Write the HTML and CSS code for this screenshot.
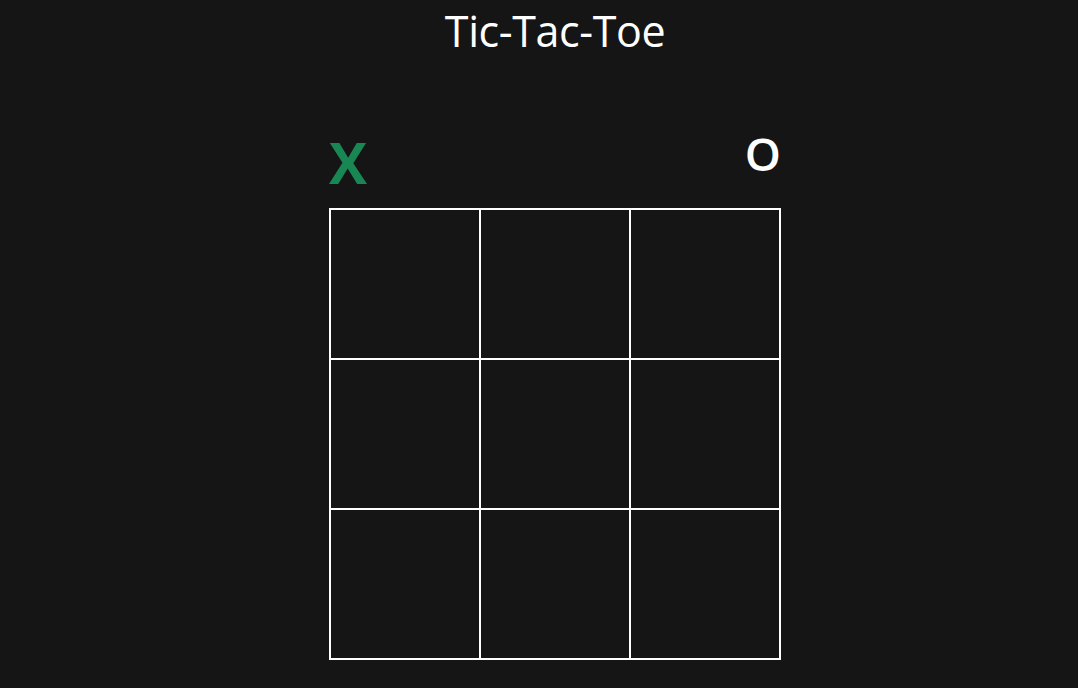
FILE: index.html
```html
<!DOCTYPE html>
<html>
<head>
<meta charset="utf-8">
<link rel="stylesheet" href="styles.css">
</head>
<body>
<main class="app">
  <h1 class="title">Tic-Tac-Toe</h1>
  <div class="game">
    <div class="players">
      <span class="player player-x active">X</span>
      <span class="player player-o">O</span>
    </div>
    <div class="board">
      <div class="cell"></div><div class="cell"></div><div class="cell"></div>
      <div class="cell"></div><div class="cell"></div><div class="cell"></div>
      <div class="cell"></div><div class="cell"></div><div class="cell"></div>
    </div>
  </div>
</main>
</body>
</html>
```
FILE: styles.css
```css
html, body {
  margin: 0;
  padding: 0;
  background: #151515;
  height: 100%;
  overflow: hidden;
}
.app {
  box-sizing: border-box;
  padding-left: 32px;
  display: flex;
  flex-direction: column;
  align-items: center;
  color: #ffffff;
  font-family: "Open Sans", "Noto Sans", sans-serif;
}
.title {
  margin: 0;
  padding-top: 1px;
  font-size: 43px;
  font-weight: 400;
  line-height: 60px;
  letter-spacing: -0.4px;
}
.game {
  margin-top: 69px;
  width: 452px;
}
.players {
  display: flex;
  justify-content: space-between;
  align-items: flex-start;
  height: 78px;
}
.player {
  font-weight: 700;
  line-height: 1;
}
.player-x {
  color: #198754;
  font-size: 57px;
  margin-top: 4px;
}
.player-o {
  color: #ffffff;
  font-size: 46px;
  font-weight: 600;
  margin-top: 0;
}
.board {
  display: grid;
  grid-template-columns: repeat(3, 150px);
  grid-template-rows: repeat(3, 150px);
  border: 1px solid #ffffff;
}
.cell {
  border: 1px solid #ffffff;
}
```
